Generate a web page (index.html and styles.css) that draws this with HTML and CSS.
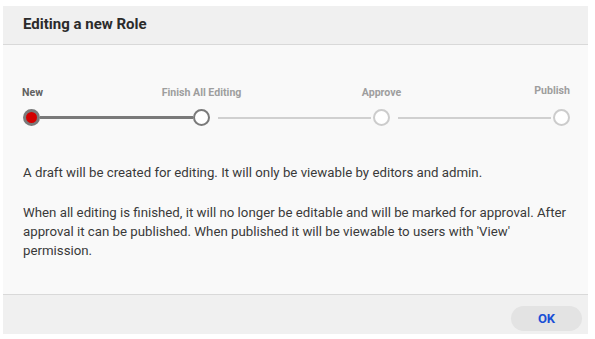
FILE: index.html
```html
<!DOCTYPE html>
<html lang="en">
<head>
    <meta charset="UTF-8">
    <title>Editing a new Role</title>
    <link rel="stylesheet" href="styles.css">
</head>
<body>

    <div class="dialog">
        <div class="dialog-header">Editing a new Role</div>

        <div class="dialog-body">
            <div class="stepper">
                <div class="step step-first done">
                    <span class="step-label">New</span>
                    <span class="step-dot current"></span>
                </div>
                <span class="step-line done"></span>
                <div class="step">
                    <span class="step-label">Finish All Editing</span>
                    <span class="step-dot next"></span>
                </div>
                <span class="step-line"></span>
                <div class="step">
                    <span class="step-label">Approve</span>
                    <span class="step-dot"></span>
                </div>
                <span class="step-line"></span>
                <div class="step step-last">
                    <span class="step-label">Publish</span>
                    <span class="step-dot"></span>
                </div>
            </div>

            <p class="description">A draft will be created for editing. It will only be viewable by editors and admin.</p>
            <p class="description">When all editing is finished, it will no longer be editable and will be marked for approval. After approval it can be published. When published it will be viewable to users with 'View' permission.</p>
        </div>

        <div class="dialog-footer">
            <button class="ok-button">OK</button>
        </div>
    </div>

</body>
</html>
```

FILE: styles.css
```css
body {
    margin: 0;
    background-color: #ffffff;
    font-family: 'Roboto', 'Liberation Sans', sans-serif;
    color: #333;
}

.dialog {
    width: 585px;
    margin: 6px 0 0 3px;
    background-color: #f9f9f9;
}

.dialog-header {
    height: 38px;
    line-height: 37px;
    padding: 0 20px;
    background-color: #f0f0f0;
    border-bottom: 1px solid #d9d9d9;
    font-size: 15px;
    font-weight: bold;
    color: #2b2b2b;
}

.dialog-body {
    padding: 40px 18px 34px 20px;
}

/* stepper */
.stepper {
    display: flex;
    align-items: flex-end;
}

.step {
    width: 17px;
    display: flex;
    flex-direction: column;
    align-items: center;
}

.step-first {
    align-items: flex-start;
}

.step-last {
    align-items: flex-end;
}

.step-label {
    white-space: nowrap;
    font-size: 10.6px;
    line-height: 12px;
    font-weight: bold;
    color: #9e9e9e;
    margin-bottom: 10px;
}

.step-first .step-label {
    color: #616161;
    margin-left: -1px;
}

.step-last .step-label {
    margin-bottom: 12px;
}

.step-dot {
    box-sizing: border-box;
    width: 17px;
    height: 17px;
    border-radius: 50%;
    border: 2px solid #cccccc;
    background-color: #ffffff;
}

.step-dot.current {
    background-color: #d40000;
    border: 3px solid #7a7a7a;
}

.step-dot.next {
    border-color: #7a7a7a;
}

.step-line {
    flex: 1;
    height: 2px;
    margin: 0 2px 7.5px 8px;
    background-color: #d0d0d0;
}

.step-line.done {
    height: 3px;
    margin: 0 0 7px 0;
    background-color: #7a7a7a;
}

.description {
    margin: 0;
    font-size: 13.25px;
    line-height: 19px;
    color: #3a3a3a;
}

.stepper + .description {
    margin-top: 37px;
}

.description + .description {
    margin-top: 21px;
}

.dialog-footer {
    height: 28px;
    padding: 11px 6px 0 0;
    background-color: #f0f0f0;
    border-top: 1px solid #d9d9d9;
    display: flex;
    justify-content: flex-end;
}

.ok-button {
    width: 71px;
    height: 25px;
    border: none;
    border-radius: 13px;
    background-color: #e3e3e3;
    color: #1a4fd6;
    font-family: 'Roboto', 'Liberation Sans', sans-serif;
    font-size: 13px;
    font-weight: bold;
    cursor: pointer;
}
```
